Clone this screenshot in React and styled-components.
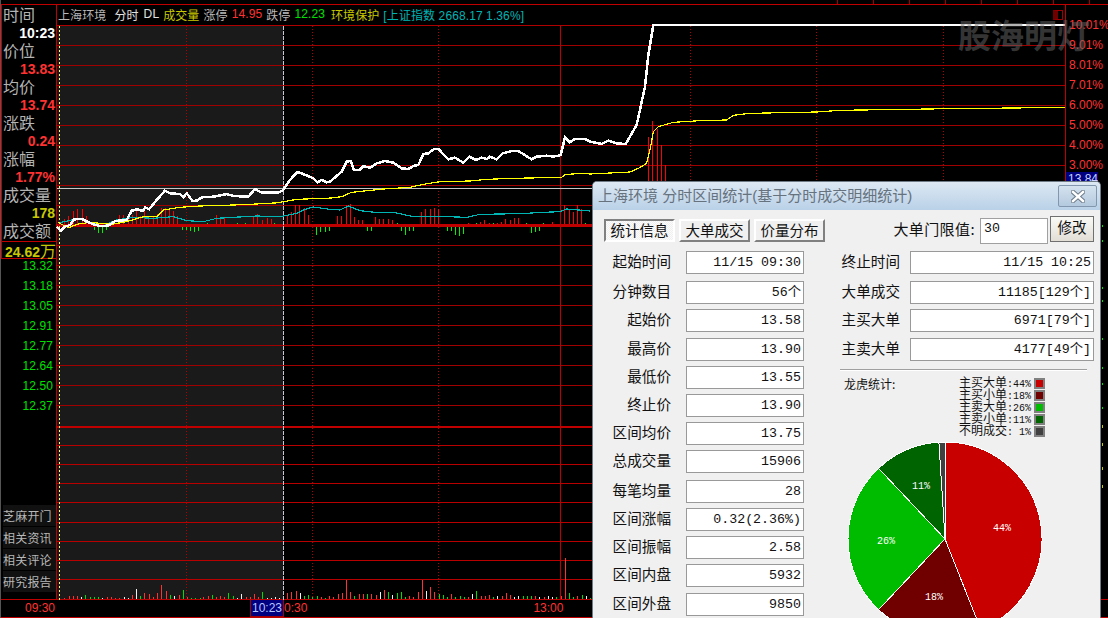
import React from 'react'
import styled, { createGlobalStyle } from 'styled-components'

const SANS = '"Liberation Sans", "Noto Sans CJK SC", sans-serif'
const CJK = '"Noto Sans CJK SC", sans-serif'
const MONO = '"Liberation Mono", "Noto Sans CJK SC", monospace'

const Global = createGlobalStyle`
  html, body { margin: 0; background: #000; }
`

const Screen = styled.div`
  position: relative;
  box-sizing: border-box;
  width: 1108px;
  height: 618px;
  background: #000;
  border-left: 1px solid #555;
  overflow: hidden;
  font-family: ${SANS};
  display: flex;
  flex-direction: column;
`

const TopStrip = styled.div`
  height: 4px;
  flex: none;
  border-bottom: 1px solid #c00000;
  display: flex;
  padding-left: 836px;
`

const TopTick = styled.div`
  width: 34px;
  flex: none;
  margin-right: 1px;
  border-left: 1px solid #a00000;
`

const Main = styled.div`
  display: flex;
  height: 595px;
  flex: none;
`

const LeftPanel = styled.div`
  box-sizing: border-box;
  width: 56px;
  flex: none;
  border-right: 1px solid #c00000;
  border-bottom: 1px solid #c00000;
  display: flex;
  flex-direction: column;
`

const InfoBox = styled.div`
  box-sizing: border-box;
  height: 254px;
  flex: none;
  padding-top: 1px;
  border-left: 1px solid #c00000;
  border-bottom: 1px solid #c00000;
`

const InfoLabel = styled.div`
  height: 18px;
  padding-left: 1px;
  font: 16px/16px ${CJK};
  color: #b4b4b4;
  white-space: nowrap;
`

const InfoValue = styled.div`
  height: 18px;
  text-align: right;
  padding-right: 1px;
  font: bold 14px/18px ${SANS};
  color: ${p => p.$color};
  white-space: nowrap;
`

const AmountBox = styled.div`
  box-sizing: border-box;
  height: 17px;
  margin-top: 1px;
  border-top: 1px solid #c00000;
  text-align: right;
  font: bold 14px/16px ${SANS};
  color: #c8c800;
  white-space: nowrap;
  & > span { font: 16px/16px ${CJK}; }
`

const PriceList = styled.div`
  display: flex;
  flex-direction: column;
  gap: 6px;
`

const PriceTick = styled.div`
  height: 14px;
  text-align: right;
  padding-right: 3px;
  font-size: 12px;
  line-height: 14px;
  letter-spacing: 0.1px;
  color: #00e000;
`

const LinkList = styled.div`
  margin-top: auto;
  padding-bottom: 7px;
  display: flex;
  flex-direction: column;
  gap: 1px;
`

const LinkButton = styled.div`
  height: 21px;
  margin-left: 2px;
  background: #111;
  font: 12px/21px ${CJK};
  letter-spacing: 0.2px;
  color: #b8b8b8;
  white-space: nowrap;
`

const Center = styled.div`
  width: 1008px;
  flex: none;
  display: flex;
  flex-direction: column;
`

const Header = styled.div`
  box-sizing: border-box;
  height: 21px;
  flex: none;
  padding: 0 0 2px 1px;
  border-bottom: 1px solid #b00000;
  display: flex;
  align-items: center;
  font-size: 12px;
  letter-spacing: 0.1px;
  white-space: nowrap;
`

const HeadText = styled.span`
  color: ${p => p.$color || '#b8b8b8'};
  margin-left: ${p => p.$left ?? 4}px;
`

const MiniBox = styled.div`
  box-sizing: border-box;
  width: 10px;
  height: 10px;
  margin: 2px 2px 0 auto;
  border: 1px solid #a00000;
  border-left-width: 5px;
  border-left-color: #700000;
`

const ChartSvg = styled.svg`
  display: block;
  width: 1008px;
  height: 574px;
  flex: none;
  overflow: visible;
`

const RightAxis = styled.div`
  box-sizing: border-box;
  flex: 1;
  min-width: 0;
  padding-top: 10px;
  border-left: 1px solid #c00000;
  border-bottom: 1px solid #c00000;
  white-space: nowrap;
`

const AxisLabel = styled.div`
  height: 20px;
  padding-left: 3px;
  font-size: 12px;
  line-height: 20px;
  color: #ff3232;
`

const PriceFlag = styled.div`
  box-sizing: border-box;
  width: 32px;
  height: 16px;
  margin-top: -3px;
  background: #000080;
  border-bottom: 1px solid #c00000;
  padding-left: 2px;
  font-size: 12px;
  line-height: 14px;
  color: #c8d0ff;
`

const TimeBar = styled.div`
  box-sizing: border-box;
  height: 18px;
  flex: none;
  border-bottom: 1px solid #c00000;
  display: flex;
  font-size: 12px;
  line-height: 16px;
  color: #ff3232;
`

const TimeLabel = styled.span`
  margin-left: ${p => p.$left}px;
`

const CursorTime = styled.span`
  box-sizing: border-box;
  width: 34px;
  height: 17px;
  margin-left: ${p => p.$left}px;
  background: #000080;
  border: 1px solid #a00000;
  border-top: none;
  text-align: center;
  color: #b8c4ff;
`

const Watermark = styled.div`
  position: absolute;
  left: 957px;
  top: 12px;
  font: bold 33px/44px ${CJK};
  color: rgba(105, 105, 105, 0.52);
  white-space: nowrap;
  pointer-events: none;
`

const SideTicks = styled.svg`
  position: absolute;
  left: 1099px;
  top: 200px;
  width: 8px;
  height: 300px;
`

const Dialog = styled.div`
  position: absolute;
  left: 591px;
  top: 181px;
  box-sizing: border-box;
  width: 509px;
  height: 437px;
  background: #f0f0f0;
  border: 1px solid #6f7c88;
  border-bottom: none;
  border-radius: 5px 5px 0 0;
  overflow: hidden;
  font-family: ${CJK};
  color: #111;
`

const TitleBar = styled.div`
  height: 28px;
  display: flex;
  align-items: center;
  padding: 0 3px 0 5px;
  background: linear-gradient(#dde8f3, #b9d1e7);
  font: 15px/28px ${SANS};
  color: #66727e;
  white-space: nowrap;
`

const CloseButton = styled.div`
  box-sizing: border-box;
  width: 39px;
  height: 22px;
  margin-left: auto;
  display: flex;
  align-items: center;
  justify-content: center;
  background: linear-gradient(#d5e2ef, #b4c9de);
  border: 1px solid #8297ad;
  border-radius: 2px;
`

const DialogBody = styled.div`
  display: flex;
  padding-left: 11px;
`

const Column = styled.div`
  flex: none;
  width: ${p => p.$width}px;
  margin-left: ${p => p.$left || 0}px;
  padding-top: ${p => p.$pad}px;
`

const Tabs = styled.div`
  display: flex;
  gap: 4px;
  margin-bottom: 9px;
`

const Tab = styled.div`
  box-sizing: border-box;
  width: 71px;
  height: 23px;
  text-align: center;
  font-size: 14.5px;
  line-height: 18px;
  background: ${p => p.$active
    ? 'repeating-conic-gradient(#f0f0f0 0 25%, #fbfbfb 0 50%) 0 0 / 2px 2px'
    : '#f0f0f0'};
  border: 2px solid;
  border-color: ${p => p.$active
    ? '#808080 #fff #fff #808080'
    : '#fff #808080 #808080 #fff'};
`

const Threshold = styled.div`
  display: flex;
  justify-content: flex-end;
  align-items: flex-start;
  height: 28px;
  margin-bottom: 7px;
`

const ThresholdLabel = styled.span`
  margin: 1px 5px 0 0;
  font-size: 15px;
  line-height: 24px;
  letter-spacing: 0.4px;
  white-space: nowrap;
`

const ThresholdInput = styled.div`
  box-sizing: border-box;
  width: 68px;
  height: 26px;
  margin-top: 2px;
  padding-left: 3px;
  background: #fff;
  border: 1px solid #a0a0a0;
  font: 13.3px/20px ${MONO};
`

const ChangeButton = styled.div`
  box-sizing: border-box;
  width: 44px;
  height: 26px;
  margin-left: 2px;
  text-align: center;
  background: linear-gradient(#fafaf6, #e2ded6);
  border: 1px solid #707070;
  font-size: 14.5px;
  line-height: 20px;
`

const Row = styled.div`
  display: grid;
  grid-template-columns: ${p => p.$label}px ${p => p.$field}px;
  column-gap: ${p => p.$gap}px;
  height: 23px;
  margin-top: ${p => p.$top}px;
`

const RowLabel = styled.div`
  text-align: right;
  font-size: 14.6px;
  line-height: 20px;
  white-space: nowrap;
`

const RowField = styled.div`
  box-sizing: border-box;
  padding-right: 2px;
  background: #fff;
  border: 1px solid #999;
  text-align: right;
  font: 13.3px/21px ${MONO};
  white-space: nowrap;
  overflow: hidden;
`

const Divider = styled.div`
  width: 247px;
  height: 1px;
  margin: 8px 0 0 -1px;
  background: #a0a0a0;
  border-bottom: 1px solid #fff;
`

const StatsHead = styled.div`
  display: flex;
  justify-content: space-between;
  width: 204px;
  padding-top: 6px;
`

const StatsTitle = styled.div`
  margin: 1px 0 0 3px;
  font-size: 12px;
  line-height: 12px;
`

const Legend = styled.div`
  width: 86px;
  display: flex;
  flex-direction: column;
`

const LegendRow = styled.div`
  display: flex;
  justify-content: space-between;
  align-items: center;
  height: 12px;
  font-size: 12px;
  line-height: 12px;
  white-space: pre;
  & > span > b { font: 10px/12px ${MONO}; }
`

const Swatch = styled.i`
  box-sizing: border-box;
  display: block;
  width: 11px;
  height: 11px;
  background: ${p => p.$color};
  border: 2px solid #808080;
`

const PieSvg = styled.svg`
  display: block;
  width: 200px;
  height: 200px;
  margin: 3px 0 0 5px;
`

// points read off the 3x crops: [x, y] in crop pixels, moved to page pixels here
const crop = (ox, oy, pts) => pts.map(([x, y]) => [ox + x / 3, oy + y / 3])
const toPoints = pts => pts.map(p => p.join(',')).join(' ')

const priceLine = [
  ...crop(0, 0, [[170,680],[182,692],[195,680],[210,675],[222,658],[245,657],[262,665],[280,673],[300,678],[325,677],[345,663],[380,660],[395,632],[412,628],[428,633],[436,622],[447,628],[470,600],[495,572],[510,580],[540,582],[550,592],[560,580],[578,603],[590,602],[605,592],[640,590],[680,582],[700,588],[745,590],[765,567],[785,578],[835,578],[850,570]]),
  ...crop(280, 0, [[10,570],[30,540],[50,518],[60,518],[100,535],[112,547],[125,540],[140,547],[150,545],[185,515],[200,485],[212,483],[222,510],[238,510],[250,498],[270,503],[290,490],[315,483],[340,488],[365,505],[385,507],[400,498],[415,495],[430,462],[445,460],[462,447],[475,447],[505,478],[525,473],[550,488],[568,470],[588,480],[605,473],[620,477],[630,470],[650,478],[668,460],[695,453],[715,453],[755,478],[770,470],[800,467],[820,470],[840,466]]),
  ...crop(540, 100, [[62,165],[75,112],[90,127],[105,117],[135,117],[150,125],[185,132],[205,122],[230,130],[257,132]]),
  ...crop(590, 0, [[140,375],[165,260],[175,165],[190,75],[1425,75]]),
]

const avgLine = [
  ...crop(0, 0, [[175,668],[205,683],[235,672],[270,667],[300,670],[340,672],[380,665],[430,650],[470,650],[490,630],[540,622],[600,618],[700,615],[770,612],[840,608]]),
  ...crop(280, 0, [[0,607],[50,598],[155,594],[185,590],[215,577],[310,567],[390,562],[430,553],[480,545],[570,543],[620,538],[700,535],[845,532],[855,524],[900,520],[930,520]]),
  ...crop(590, 0, [[0,522],[120,516],[145,505],[170,490],[180,450],[190,395],[205,380],[250,367],[330,362],[410,360],[430,346],[480,340],[680,336],[750,331],[1080,326],[1360,323],[1425,322]]),
]

const ratioLine = [
  ...crop(0, 0, [[180,668],[215,660],[240,657],[275,670],[320,672],[350,660],[400,652],[460,655],[520,650],[560,662],[610,665],[650,655],[700,652],[770,648],[840,650]]),
  ...crop(280, 0, [[0,650],[50,640],[75,628],[100,621],[150,628],[180,630],[205,618],[240,632],[285,637],[340,637],[400,650],[500,650],[560,652],[600,643],[720,641],[790,637],[840,635],[860,627],[930,633]]),
]

// net volume bars around the thick line at y=226: [x, height], negative goes down
const netUp = [
  [60,3],[64,6],[68,9],[73,14],[77,16],[82,16],[86,9],[119,10],[123,10],[128,11],[132,10],[136,14],[140,9],[144,14],[148,9],[153,9],[157,11],[161,17],[165,17],[169,17],[173,14],[177,9],
  [216,10],[220,6],[224,7],[253,8],[257,11],[262,5],[267,7],[271,6],
  [287,10],[291,13],[295,20],[299,20],[304,17],[308,10],[337,9],[341,9],[346,20],[350,21],[354,8],[358,5],[362,5],[375,8],[379,6],[383,6],[388,6],[392,5],
  [421,13],[425,16],[430,16],[434,17],[438,16],[468,2],[480,3],[484,5],[489,2],[497,2],[501,3],[505,6],[510,5],[514,7],[518,7],[552,3],[564,20],[569,16],[573,13],[577,20],[581,16],
  [644,18],[648,88],[652,104],[657,96],[661,80],[665,60],
]
const netDown = [
  [94,3],[98,6],[102,6],[106,3],[182,3],[186,3],[190,4],[194,5],[198,4],
  [316,8],[320,5],[325,5],[329,4],[367,4],[371,4],[401,4],[405,8],[409,4],[413,4],[447,4],[451,4],[455,8],[459,9],[463,7],[531,6],[535,5],[539,4],
]
const netTick = [[207,1],[237,1],[245,1],[274,1],[397,1],[476,1],[493,1],[526,1],[543,1],[585,1]]

// volume bars on the floor of the chart (y=599): [x, height, colour key]
const volume = [
  [64,1,'r'],[69,3,'r'],[73,3,'r'],[77,3,'r'],[81,2,'w'],[85,4,'g'],[90,2,'g'],[94,2,'g'],[98,2,'g'],[102,1,'w'],[107,2,'r'],[111,2,'r'],[115,1,'r'],[119,1,'r'],[124,2,'w'],[128,1,'w'],
  [132,4,'r'],[136,10,'w'],[140,3,'g'],[144,6,'r'],[149,5,'r'],[153,2,'r'],[157,6,'r'],[161,14,'r'],[166,8,'r'],[170,4,'g'],[174,3,'w'],[179,4,'r'],[183,9,'g'],[187,2,'r'],[191,1,'g'],[195,1,'g'],[200,1,'g'],
  [203,2,'r'],[208,3,'r'],[212,4,'g'],[216,2,'r'],[220,3,'r'],[224,2,'r'],[228,6,'g'],[233,3,'g'],[237,1,'w'],[241,5,'w'],[246,2,'r'],[250,2,'r'],[254,5,'r'],[258,2,'r'],[262,7,'g'],[267,1,'w'],[271,1,'w'],[275,2,'w'],[279,1,'w'],
  ...[[22,1118,'r'],[34,1115,'r'],[48,1112,'r'],[60,1118,'w'],[73,1127,'g'],[85,1125,'g'],[97,1130,'g'],[112,1127,'g'],[124,1130,'r'],[136,1134,'g'],[148,1128,'r'],[160,1130,'r'],[175,1121,'r'],[187,1118,'r'],[199,1079,'r'],[211,1115,'r'],[223,1127,'g'],[238,1122,'r'],[250,1122,'r'],[262,1121,'g'],[274,1121,'r'],[289,1124,'r'],[301,1115,'w'],[313,1109,'r'],[325,1115,'g'],[337,1124,'w'],[352,1118,'g'],[364,1115,'g'],[376,1130,'g'],[388,1127,'r'],[400,1130,'r'],[415,1115,'r'],[427,1079,'r'],[439,1112,'w'],[451,1100,'r'],[463,1115,'r'],[478,1121,'g'],[490,1124,'g'],[502,1130,'g'],[514,1121,'r'],[526,1130,'g'],[541,1127,'g'],[553,1130,'g'],[565,1130,'r'],[577,1121,'w'],[589,1112,'g'],[604,1127,'r'],[616,1127,'r'],[628,1124,'r'],[640,1130,'g'],[652,1127,'w'],[667,1127,'r'],[679,1118,'r'],[691,1124,'r'],[703,1130,'w'],[715,1127,'w'],[730,1127,'g'],[742,1127,'g'],[754,1127,'g'],[766,1127,'r'],[778,1130,'w'],[793,1130,'r'],[805,1127,'w'],[817,1130,'w'],[829,1130,'g'],[844,1127,'r'],[856,1013,'r'],[868,1118,'g'],[880,1130,'g'],[892,1127,'r'],[907,1124,'g'],[919,1127,'w'],[931,1133,'g']]
    .map(([x, top, c]) => [Math.round(280 + x / 3), Math.round((1137 - top) / 3), c]),
]
const volColor = { r: '#ff3232', g: '#00e000', w: '#f0f0f0' }

const thinLines = [45,65,85,105,125,145,165,185,205,245,265,285,305,325,345,365,385,405]
const lowerLines = [445,464,483,502,522,541,560,579]
const dottedX = [186,312,438,690,816,943]

function Chart() {
  return (
    <ChartSvg viewBox="57 26 1008 574" shapeRendering="crispEdges">
      <rect x="57" y="26" width="226" height="574" fill="#1a1a1a" />
      {thinLines.map(y => <line key={y} x1="57" x2="1065" y1={y + 0.5} y2={y + 0.5} stroke="#a00000" />)}
      {lowerLines.map(y => <line key={y} x1="57" x2="1065" y1={y + 0.5} y2={y + 0.5} stroke="#b80000" />)}
      <line x1="57" x2="1065" y1="427" y2="427" stroke="#c00000" strokeWidth="2" />
      <line x1="57" x2="1065" y1="225.5" y2="225.5" stroke="#c00000" strokeWidth="3" />
      <line x1="57" x2="1065" y1="599.5" y2="599.5" stroke="#c00000" />
      {dottedX.map(x => <line key={x} x1={x + 0.5} x2={x + 0.5} y1="26" y2="600" stroke="#b00000" strokeDasharray="1 2" />)}
      <line x1="560.5" x2="560.5" y1="26" y2="600" stroke="#c00000" />
      <line x1="59.5" x2="59.5" y1="26" y2="600" stroke="#ffff60" strokeDasharray="2 2" />
      <line x1="283.5" x2="283.5" y1="26" y2="600" stroke="#c8c8d4" strokeDasharray="4 1" />

      {netUp.map(([x, h], i) => <line key={i} x1={x + 0.5} x2={x + 0.5} y1={224} y2={225 - h} stroke="#ff0000" />)}
      {netDown.map(([x, h], i) => <line key={i} x1={x + 0.5} x2={x + 0.5} y1={227} y2={227 + h} stroke="#00f000" />)}
      {netTick.map(([x], i) => <line key={i} x1={x} x2={x + 1} y1={223.5} y2={223.5} stroke="#00f000" />)}
      {volume.map(([x, h, c], i) => <line key={i} x1={x + 0.5} x2={x + 0.5} y1={599} y2={599 - h} stroke={volColor[c]} />)}

      <line x1="57" x2="592" y1="188.5" y2="188.5" stroke="#c8c8c8" />
      <line x1="385" x2="395" y1="188.5" y2="188.5" stroke="#3030b0" />
      <polyline points={toPoints(ratioLine)} fill="none" stroke="#00b4b4" strokeWidth="1.2" />
      <polyline points={toPoints(avgLine)} fill="none" stroke="#ffff00" strokeWidth="1.2" />
      <polyline points={toPoints(priceLine)} fill="none" stroke="#ffffff" strokeWidth="2.5" />
    </ChartSvg>
  )
}

const slices = [
  { pct: 44, color: '#c80000' },
  { pct: 18, color: '#700000' },
  { pct: 26, color: '#00bc00' },
  { pct: 11, color: '#006400' },
  { pct: 1, color: '#404040' },
]
const pieLabels = [
  { text: '44%', x: 156, y: 88 },
  { text: '18%', x: 88, y: 157 },
  { text: '26%', x: 40, y: 101 },
  { text: '11%', x: 75, y: 46 },
]

function Pie() {
  const cx = 99, cy = 99, r = 97
  const at = pct => {
    const a = (pct / 100) * Math.PI * 2
    return [cx + r * Math.sin(a), cy - r * Math.cos(a)]
  }
  let sum = 0
  return (
    <PieSvg viewBox="0 0 200 200">
      <g shapeRendering="crispEdges">
        {slices.map(s => {
          const [x1, y1] = at(sum)
          sum += s.pct
          const [x2, y2] = at(sum)
          return (
            <path
              key={s.color}
              d={`M${cx} ${cy}L${x1} ${y1}A${r} ${r} 0 ${s.pct > 50 ? 1 : 0} 1 ${x2} ${y2}Z`}
              fill={s.color}
              stroke="#fff"
              strokeWidth="1"
            />
          )
        })}
      </g>
      {pieLabels.map(l => (
        <text key={l.text} x={l.x} y={l.y} textAnchor="middle" dominantBaseline="central" fill="#fff" fontFamily="Liberation Mono, monospace" fontSize="10">
          {l.text}
        </text>
      ))}
    </PieSvg>
  )
}

const info = [
  ['时间', '10:23', '#fff'],
  ['价位', '13.83', '#ff3232'],
  ['均价', '13.74', '#ff3232'],
  ['涨跌', '0.24', '#ff3232'],
  ['涨幅', '1.77%', '#ff3232'],
  ['成交量', '178', '#c8c800'],
]
const prices = ['13.32','13.18','13.05','12.91','12.77','12.64','12.50','12.37']
const links = ['芝麻开门','相关资讯','相关评论','研究报告']
const percents = ['10.01%','9.01%','8.01%','7.01%','6.00%','5.00%','4.00%','3.00%']

const leftRows = [
  ['起始时间','11/15 09:30',0],
  ['分钟数目','56个',7],
  ['起始价','13.58',5],
  ['最高价','13.90',6],
  ['最低价','13.55',5],
  ['终止价','13.90',5],
  ['区间均价','13.75',5],
  ['总成交量','15906',5],
  ['每笔均量','28',7],
  ['区间涨幅','0.32(2.36%)',5],
  ['区间振幅','2.58',5],
  ['区间内盘','5932',5],
  ['区间外盘','9850',6],
]
const rightRows = [
  ['终止时间','11/15 10:25',0],
  ['大单成交','11185[129个]',7],
  ['主买大单','6971[79个]',5],
  ['主卖大单','4177[49个]',6],
]
const legend = [
  ['主买大单',':44%','#c80000'],
  ['主买小单',':18%','#700000'],
  ['主卖大单',':26%','#00bc00'],
  ['主卖小单',':11%','#006400'],
  ['不明成交',': 1%','#404040'],
]

export default function App() {
  return (
    <Screen>
      <Global />
      <TopStrip>
        {[...Array(8)].map((_, i) => <TopTick key={i} />)}
      </TopStrip>
      <Main>
        <LeftPanel>
          <InfoBox>
            {info.map(([label, value, color]) => (
              <React.Fragment key={label}>
                <InfoLabel>{label}</InfoLabel>
                <InfoValue $color={color}>{value}</InfoValue>
              </React.Fragment>
            ))}
            <InfoLabel>成交额</InfoLabel>
            <AmountBox>24.62<span>万</span></AmountBox>
          </InfoBox>
          <PriceList>
            {prices.map(p => <PriceTick key={p}>{p}</PriceTick>)}
          </PriceList>
          <LinkList>
            {links.map(l => <LinkButton key={l}>{l}</LinkButton>)}
          </LinkList>
        </LeftPanel>
        <Center>
          <Header>
            <HeadText $left={0}>上海环境</HeadText>
            <HeadText $left={8} $color="#e0e0e0">分时</HeadText>
            <HeadText $left={5} $color="#e0e0e0">DL</HeadText>
            <HeadText $color="#c8c800">成交量</HeadText>
            <HeadText>涨停</HeadText>
            <HeadText $color="#ff3232">14.95</HeadText>
            <HeadText>跌停</HeadText>
            <HeadText $color="#00e000">12.23</HeadText>
            <HeadText $left={6} $color="#c8c800">环境保护</HeadText>
            <HeadText $color="#00b4b4">[上证指数 2668.17 1.36%]</HeadText>
            <MiniBox />
          </Header>
          <Chart />
        </Center>
        <RightAxis>
          {percents.map(p => <AxisLabel key={p}>{p}</AxisLabel>)}
          <PriceFlag>13.84</PriceFlag>
        </RightAxis>
      </Main>
      <TimeBar>
        <TimeLabel $left={24}>09:30</TimeLabel>
        <CursorTime $left={195}>10:23</CursorTime>
        <TimeLabel $left={0}>0:30</TimeLabel>
        <TimeLabel $left={226}>13:00</TimeLabel>
      </TimeBar>

      <Watermark>股海明灯</Watermark>

      <SideTicks viewBox="0 0 8 300" shapeRendering="crispEdges">
        {[25,40,87,100,138,167,183,207].map(y => <rect key={y} x="2" y={y} width="1" height="2" fill="#00e000" />)}
        {[225,243,267,285].map(y => <rect key={y} x="2" y={y} width="1" height="3" fill="#c8c800" />)}
      </SideTicks>

      <Dialog>
        <TitleBar>
          上海环境 分时区间统计(基于分时成交明细统计)
          <CloseButton>
            <svg width="14" height="13" viewBox="0 0 14 13">
              <path d="M2 2L12 11M12 2L2 11" stroke="#6d7b8a" strokeWidth="4.4" strokeLinecap="square" />
              <path d="M2 2L12 11M12 2L2 11" stroke="#fff" strokeWidth="2.4" strokeLinecap="square" />
            </svg>
          </CloseButton>
        </TitleBar>
        <DialogBody>
          <Column $width={222} $pad={9}>
            <Tabs>
              <Tab $active>统计信息</Tab>
              <Tab>大单成交</Tab>
              <Tab>价量分布</Tab>
            </Tabs>
            {leftRows.map(([label, value, top]) => (
              <Row key={label} $label={67} $field={118} $gap={15} $top={top}>
                <RowLabel>{label}</RowLabel>
                <RowField>{value}</RowField>
              </Row>
            ))}
          </Column>
          <Column $width={253} $pad={6} $left={15}>
            <Threshold>
              <ThresholdLabel>大单门限值:</ThresholdLabel>
              <ThresholdInput>30</ThresholdInput>
              <ChangeButton>修改</ChangeButton>
            </Threshold>
            {rightRows.map(([label, value, top]) => (
              <Row key={label} $label={59} $field={184} $gap={10} $top={top}>
                <RowLabel>{label}</RowLabel>
                <RowField>{value}</RowField>
              </Row>
            ))}
            <Divider />
            <StatsHead>
              <StatsTitle>龙虎统计:</StatsTitle>
              <Legend>
                {legend.map(([name, pct, color]) => (
                  <LegendRow key={name}>
                    <span>{name}<b>{pct}</b></span>
                    <Swatch $color={color} />
                  </LegendRow>
                ))}
              </Legend>
            </StatsHead>
            <Pie />
          </Column>
        </DialogBody>
      </Dialog>
    </Screen>
  )
}
